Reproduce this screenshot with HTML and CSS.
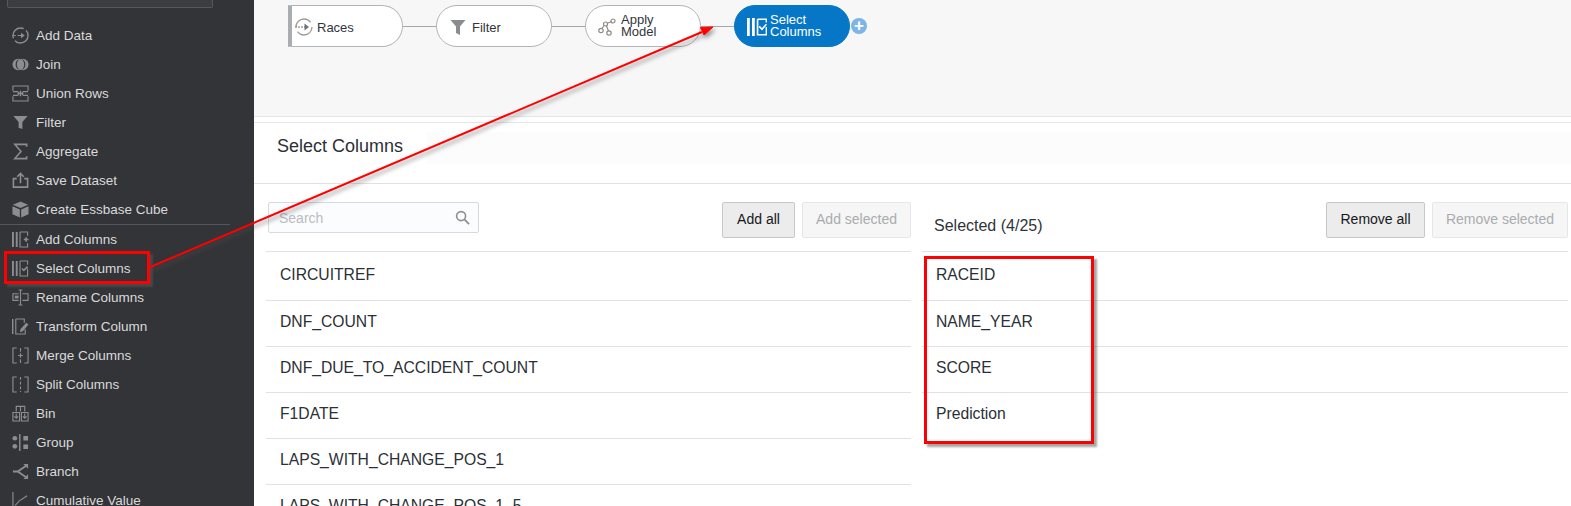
FILE: index.html
```html
<!DOCTYPE html>
<html lang="en">
<head>
  <meta charset="UTF-8" />
  <title>Select Columns</title>
  <link rel="stylesheet" href="styles.css">
</head>
<body>
  <div class="page">
    <aside class="sidebar">
      <div class="side-search"></div>
      <ul class="steps">
        <li><svg viewBox="0 0 18 18"><circle cx="9" cy="9" r="8" stroke-dasharray="19 3" stroke-width="1.500"/><path d="M1 9h3M6 9h5"/><path class="solid" d="M9.500 6 13.500 9 9.500 12z"/></svg>Add Data</li>
        <li><svg viewBox="0 0 18 18"><circle class="solid" cx="6.500" cy="9" r="6"/><circle class="solid" cx="11.500" cy="9" r="6"/><path class="dark" d="M8 3.300a6 6 0 0 0 0 11.400 7 7 0 0 1 0-11.400zM10 3.300a6 6 0 0 1 0 11.400 7 7 0 0 0 0-11.400z"/></svg>Join</li>
        <li><svg viewBox="0 0 18 18"><path d="M1 6V1h16v5M1 12v5h16v-5M1 7h5l1.500 2L6 11H1M17 7h-5l-1.500 2 1.500 2h5"/><path d="M9 6v6M6 9h6" stroke-width="1.500"/></svg>Union Rows</li>
        <li><svg viewBox="0 0 18 18"><path class="solid" d="M1.500 2h15l-5.500 6.500V16l-4-1.500v-6z"/></svg>Filter</li>
        <li><svg viewBox="0 0 18 18"><path d="M15.500 4V1.500H3l6.500 7.500L3 16.500h12.500V14" stroke-width="1.700"/></svg>Aggregate</li>
        <li><svg viewBox="0 0 18 18"><path d="M5 7H1.500v9h15V7H13" stroke-width="1.700"/><path d="M9 12V2M5.500 5 9 1.500 12.500 5" stroke-width="1.700"/></svg>Save Dataset</li>
        <li class="last-group"><svg viewBox="0 0 18 18"><path class="solid" d="M9 0.500 1 4l8 3.500L17 4zM0.500 5.500v8.500l7.800 3.500V9zM17.500 5.500v8.500l-7.800 3.500V9z"/></svg>Create Essbase Cube</li>
        <li class="first-group"><svg viewBox="0 0 18 18"><path class="solid" d="M0 1h2v16H0zM4 1h2v16H4z"/><path d="M8.500 1h8v4M8.500 1v16h8v-4"/><path d="M12.500 9h5M15 6.500v5" stroke-width="1.700"/></svg>Add Columns</li>
        <li><svg viewBox="0 0 18 18"><path class="solid" d="M0 1h2v16H0zM4 1h2v16H4z"/><path d="M8.500 1h8v4M8.500 1v16h8V9"/><path d="m10.500 9 2 2 4-4" stroke-width="1.700"/></svg>Select Columns</li>
        <li><svg viewBox="0 0 18 18"><path d="M9 1v16M7 1h4M7 17h4M7 5H1v7h6M11 5h6v7h-6"/><path class="solid" d="M3 7h4v3H3z"/></svg>Rename Columns</li>
        <li><svg viewBox="0 0 18 18"><path class="solid" d="M0 1h1.500v16H0z"/><path d="M4 1h9v4M4 1v16h10v-5"/><path class="solid" d="M9 12l6-7 2.500 2-6 7-3 1z"/></svg>Transform Column</li>
        <li><svg viewBox="0 0 18 18"><path d="M5 1H1v16h4M13 1h4v16h-4M9 1v4M9 13v4M6.500 9h5M9 6.500v5"/></svg>Merge Columns</li>
        <li><svg viewBox="0 0 18 18"><path d="M5 1H1v16h4M13 1h4v16h-4"/><path d="M9 1v16" stroke-dasharray="3 2"/></svg>Split Columns</li>
        <li><svg viewBox="0 0 18 18"><path d="M4.500 7V1.500h9V7M9 1.500V7M1 8h7v9H1zM10 8h7v9h-7zM4.500 9v5M2.500 12l2 2 2-2M13.500 9v5M11.500 12l2 2 2-2"/></svg>Bin</li>
        <li><svg viewBox="0 0 18 18"><circle class="solid" cx="3" cy="4.500" r="2.500"/><circle class="solid" cx="3" cy="13" r="2.500"/><path class="solid" d="M7.500 0h1.500v18H7.500zM12 2h5v5h-5zM12 11h5v5h-5z"/></svg>Group</li>
        <li><svg viewBox="0 0 18 18"><path d="M1 9h5L15 3M6 9l9 6" stroke-width="2"/><path class="solid" d="M12 1h5v5zM12 17h5v-5z"/></svg>Branch</li>
        <li><svg viewBox="0 0 18 18"><path d="M1 0v17h17M3 14c3-1 3-5 7-6l6-4"/></svg>Cumulative Value</li>
      </ul>
    </aside>

    <main class="content">
      <section class="canvas">
        <div class="flow">
          <div class="node node-source">
            <svg viewBox="0 0 18 18"><circle cx="9" cy="9" r="8" fill="none" stroke="#a39a94" stroke-width="1.300" stroke-dasharray="20 5"/><path d="M0 9h11" fill="none" stroke="#6d7378" stroke-dasharray="2 1"/><path d="M9.500 5.500 14 9l-4.500 3.500z" fill="#6d7378"/></svg>
            <span>Races</span>
          </div>
          <div class="link"></div>
          <div class="node">
            <svg viewBox="0 0 18 18"><path d="M1.500 2h15l-5.500 6.500V17l-4-2V8.500z" fill="#8a8d90"/></svg>
            <span>Filter</span>
          </div>
          <div class="link"></div>
          <div class="node">
            <svg viewBox="0 0 18 18"><g fill="none" stroke="#8f8a86" stroke-width="1.200"><circle cx="3" cy="12.500" r="2.200"/><circle cx="7.500" cy="6" r="2"/><circle cx="11" cy="15" r="2.200"/><circle cx="15" cy="3" r="2"/><path d="M4 10.500l2-3M8.500 8l2 5M9.300 5.300l3.800-1.600"/></g></svg>
            <span class="two-line">Apply<br>Model</span>
          </div>
          <div class="link"></div>
          <div class="node node-active">
            <svg viewBox="0 0 18 18"><path d="M0 1h2.500v16H0zM4.500 1h2.500v16H4.500z" fill="#fff"/><path d="M9.500 2h8v3M9.500 2v14h8V9" fill="none" stroke="#fff" stroke-width="1.500"/><path d="m11 8.500 2.500 2.500 4-4.500" fill="none" stroke="#fff" stroke-width="1.500"/></svg>
            <span class="two-line">Select<br>Columns</span>
          </div>
          <div class="add-step">+</div>
        </div>
      </section>

      <section class="editor">
        <header class="editor-head">
          <h2>Select Columns</h2>
          <div class="head-band"></div>
        </header>
        <div class="panels">
          <div class="panel panel-left">
            <div class="toolbar">
              <div class="search">
                <span>Search</span>
                <svg viewBox="0 0 16 16"><circle cx="6.500" cy="6.500" r="4.800" fill="none" stroke="#8a9096" stroke-width="1.700"/><path d="m10 10 5 5" stroke="#8a9096" stroke-width="2"/></svg>
              </div>
              <div class="buttons">
                <button class="btn">Add all</button>
                <button class="btn btn-off">Add selected</button>
              </div>
            </div>
            <ul class="rows">
              <li>CIRCUITREF</li>
              <li>DNF_COUNT</li>
              <li>DNF_DUE_TO_ACCIDENT_COUNT</li>
              <li>F1DATE</li>
              <li>LAPS_WITH_CHANGE_POS_1</li>
              <li>LAPS_WITH_CHANGE_POS_1_5</li>
            </ul>
          </div>
          <div class="panel">
            <div class="toolbar">
              <div class="selected-count">Selected (4/25)</div>
              <div class="buttons">
                <button class="btn btn-remove">Remove all</button>
                <button class="btn btn-off btn-remove-sel">Remove selected</button>
              </div>
            </div>
            <ul class="rows">
              <li>RACEID</li>
              <li>NAME_YEAR</li>
              <li>SCORE</li>
              <li>Prediction</li>
            </ul>
          </div>
        </div>
      </section>
    </main>

    <!-- callouts drawn over the screenshot -->
    <div class="callout callout-menu"></div>
    <div class="callout callout-list"></div>
    <svg class="arrow" viewBox="0 0 1571 506">
      <path d="M148 268 702 32" stroke-width="2"/>
      <path d="M713 27 700.500 27.500 704 35z"/>
    </svg>
  </div>
</body>
</html>
```

FILE: styles.css
```css
* {
  box-sizing: border-box;
}
html, body {
  margin: 0;
  height: 100%;
  overflow: hidden;
}
body {
  font-family: "Liberation Sans", Arial, sans-serif;
  background: #fff;
  color: #2b3036;
}
ul {
  list-style: none;
  margin: 0;
  padding: 0;
}
.page {
  position: relative;
  display: flex;
  width: 1571px;
  height: 506px;
  overflow: hidden;
}

/* left step list */
.sidebar {
  flex: 0 0 254px;
  background: #333437;
  overflow: hidden;
}
.side-search {
  width: 206px;
  height: 8px;
  margin-left: 7px;
  background: #3c3d40;
  border: 1px solid #55575a;
  border-top: 0;
  border-radius: 0 0 2px 2px;
}
.steps {
  margin-top: 13px;
}
.steps li {
  display: flex;
  align-items: center;
  gap: 7px;
  height: 29px;
  padding-left: 12px;
  font-size: 13.500px;
  color: #d9dadb;
}
.steps svg {
  flex: 0 0 17px;
  width: 17px;
  height: 17px;
  stroke: #8b8e91;
  stroke-width: 1.200;
  fill: none;
}
.steps .solid {
  fill: #8b8e91;
  stroke: none;
}
.steps .dark {
  fill: #333437;
  stroke: none;
}
.steps .last-group {
  width: 230px;
}
.steps .first-group {
  width: 230px;
  height: 30px;
  border-top: 1px solid #55575a;
}

/* flow canvas */
.content {
  flex: 1;
  display: flex;
  flex-direction: column;
  min-width: 0;
}
.canvas {
  height: 117px;
  background: #f7f7f7;
  border-bottom: 1px solid #e3e6e8;
  padding: 5px 0 0 34px;
}
.flow {
  display: flex;
  align-items: center;
  height: 42px;
}
.node {
  flex: 0 0 116px;
  display: flex;
  align-items: center;
  gap: 5px;
  height: 42px;
  padding: 1px 0 0 12px;
  background: #fff;
  border: 1px solid #b2b5b7;
  border-radius: 21px;
  font-size: 13px;
  color: #31363c;
}
.node span {
  margin-top: 2px;
}
.node svg {
  flex: 0 0 18px;
  width: 18px;
  height: 18px;
}
.node-source {
  flex-basis: 115px;
  padding-left: 3px;
  border-left: 4px solid #a9adb0;
  border-radius: 0 21px 21px 0;
  gap: 4px;
}
.node-active {
  background: #0677c6;
  border-color: #0677c6;
  color: #fff;
  gap: 3px;
}
.node-active svg {
  flex-basis: 20px;
  width: 20px;
  height: 20px;
}
.node .two-line {
  margin-top: -2px;
  line-height: 12px;
}
.link {
  flex: 0 0 33px;
  height: 1px;
  background: #a5a8aa;
}
.add-step {
  width: 16px;
  height: 16px;
  margin-left: 1px;
  border-radius: 50%;
  background: #7db5e6;
  color: #fff;
  font-size: 17px;
  font-weight: bold;
  line-height: 15px;
  text-align: center;
}

/* column picker */
.editor {
  flex: 1;
  margin-top: 5px;
  border-top: 1px solid #e3e6e8;
  min-height: 0;
}
.editor-head {
  display: flex;
  align-items: flex-start;
  height: 61px;
  padding: 9px 0 0 23px;
  border-bottom: 1px solid #dfe1e2;
}
.editor-head h2 {
  margin: 0 24px 0 0;
  font-size: 18px;
  font-weight: normal;
  line-height: 28px;
  color: #2b3036;
}
.head-band {
  flex: 1;
  height: 32px;
  background: #fcfcfd;
}
.panels {
  display: flex;
  gap: 11px;
  padding: 0 3px 0 12px;
}
.panel {
  flex: 1;
  min-width: 0;
}
.panel-left {
  flex: 0 0 645px;
}
.toolbar {
  display: flex;
  justify-content: space-between;
  height: 67px;
  padding-top: 18px;
}
.search {
  display: flex;
  align-items: center;
  justify-content: space-between;
  width: 211px;
  height: 31px;
  margin-left: 2px;
  padding: 0 8px 0 10px;
  background: #fbfcfe;
  border: 1px solid #d3dbe0;
  border-radius: 2px;
  font-size: 14px;
  color: #b9bdc1;
}
.search svg {
  width: 15px;
  height: 15px;
}
.selected-count {
  padding: 15px 0 0 12px;
  font-size: 16px;
  color: #2f3439;
}
.buttons {
  display: flex;
  gap: 7px;
  align-items: flex-start;
}
.btn {
  height: 36px;
  width: 73px;
  padding: 0 0 2px;
  font-family: inherit;
  font-size: 14px;
  color: #15181b;
  background: #ececec;
  border: 1px solid #c6c8c9;
  border-radius: 2px;
}
.btn-off {
  width: 109px;
  color: #a9acaf;
  background: #f6f6f6;
  border-color: #e6e7e8;
}
.btn-remove {
  width: 99px;
}
.btn-remove-sel {
  width: 136px;
}
.rows li {
  display: flex;
  align-items: center;
  height: 46px;
  padding: 0 0 3px 14px;
  border-top: 1px solid #dfe1e2;
  font-size: 15.700px;
  color: #2b3036;
}
.rows li:first-child {
  height: 49px;
}

/* annotations over the screenshot */
.callout {
  position: absolute;
  border: 3px solid #f00;
  box-shadow: 3px 3px 2px rgba(90, 90, 90, 0.55);
}
.callout-menu {
  left: 4px;
  top: 251px;
  width: 146px;
  height: 33px;
}
.callout-list {
  left: 924px;
  top: 256px;
  width: 170px;
  height: 188px;
}
.arrow {
  position: absolute;
  left: 0;
  top: 0;
  width: 1571px;
  height: 506px;
  pointer-events: none;
  filter: drop-shadow(2px 3px 2px rgba(80, 80, 80, 0.6));
}
.arrow path {
  stroke: #f00;
  fill: #f00;
}
```
